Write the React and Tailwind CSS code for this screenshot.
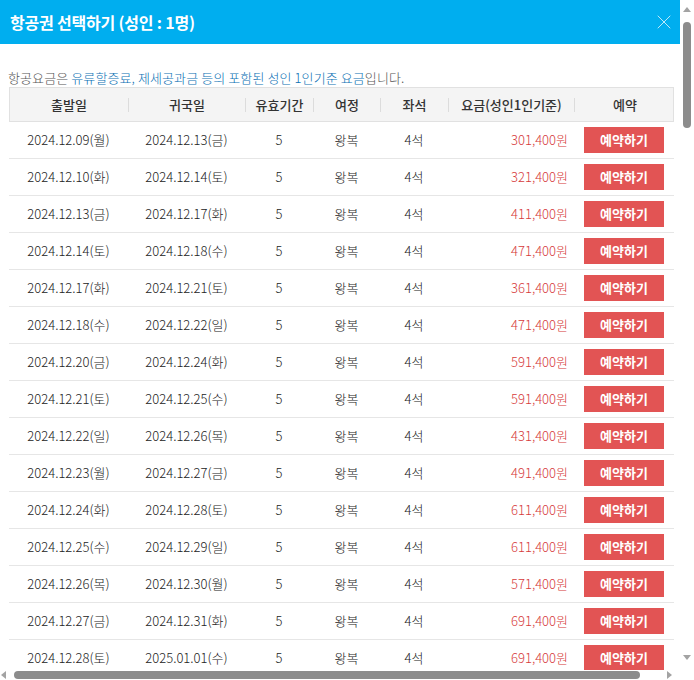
import { X } from "lucide-react";

const DAYS = ["일", "월", "화", "수", "목", "금", "토"];

const pad = n => String(n).padStart(2, "0");
const fmt = d => `${d.getFullYear()}.${pad(d.getMonth() + 1)}.${pad(d.getDate())}(${DAYS[d.getDay()]})`;

// 출발일 (12월), 요금
const visible = [
  [9, 301400], [10, 321400], [13, 411400], [14, 471400], [17, 361400],
  [18, 471400], [20, 591400], [21, 591400], [22, 431400], [23, 491400],
  [24, 611400], [25, 611400], [26, 571400], [27, 691400], [28, 691400],
];

const rows = visible.map(([day, price]) => {
  const dep = new Date(2024, 11, day);
  const ret = new Date(2024, 11, day + 4);
  return { dep: fmt(dep), ret: fmt(ret), price };
});

const cols = [
  { label: "출발일", w: "w-[119px]" },
  { label: "귀국일", w: "w-[117px]" },
  { label: "유효기간", w: "w-[68px]" },
  { label: "여정", w: "w-[67px]" },
  { label: "좌석", w: "w-[68px]" },
  { label: "요금(성인1인기준)", w: "w-[126px]" },
  { label: "예약", w: "w-[100px]" },
];

function Tri({ dir }) {
  const pts = {
    up: "0,5 4,0 8,5",
    down: "0,0 8,0 4,5",
    left: "5,0 5,8 0,4",
    right: "0,0 0,8 5,4",
  }[dir];
  const vertical = dir === "up" || dir === "down";
  return (
    <svg width={vertical ? 8 : 5} height={vertical ? 5 : 8} viewBox={vertical ? "0 0 8 5" : "0 0 5 8"}>
      <polygon points={pts} fill="#a3a3a3" />
    </svg>
  );
}

export default function App() {
  return (
    <div
      className="w-[694px] h-[680px] flex flex-col overflow-hidden bg-white text-[#333]"
      style={{ fontFamily: '"Noto Sans CJK KR", "Noto Sans", sans-serif' }}
    >
      <div className="flex flex-1 min-h-0">
        <div className="w-[680px] overflow-hidden">
          <div className="h-[44px] bg-[#00aeef] flex items-center justify-between pl-[10px] pr-[4px]">
            <h1 className="text-white text-[16px] font-bold tracking-[-0.2px]">항공권 선택하기 (성인 : 1명)</h1>
            <X className="w-[24px] h-[24px] text-[#bfeaf9]" strokeWidth={1} />
          </div>

          <p className="mt-[25px] ml-[8px] text-[13px] leading-[18px] text-[#555] font-light tracking-[0.1px]">
            항공요금은 <span className="text-[#0a70b4]">유류할증료, 제세공과금 등의 포함된 성인 1인기준 요금</span>입니다.
          </p>

          <div className="ml-[9px] w-[665px]">
            <div className="flex h-[35px] bg-[#f4f4f4] border border-[#e1e1e1] text-[13px] text-[#333] font-medium">
              {cols.map((c, i) => (
                <div key={c.label} className={`${c.w} shrink-0 flex items-center relative`}>
                  <span className="flex-1 text-center">{c.label}</span>
                  {i < cols.length - 1 && <span className="w-px h-[14px] bg-[#dcdcdc]" />}
                </div>
              ))}
            </div>

            {rows.map(r => (
              <div key={r.dep} className="flex h-[37px] items-center border-b border-[#e6e6e6] text-[13px] text-[#222] font-light">
                <div className="w-[119px] shrink-0 text-center">{r.dep}</div>
                <div className="w-[117px] shrink-0 text-center">{r.ret}</div>
                <div className="w-[68px] shrink-0 text-center">5</div>
                <div className="w-[67px] shrink-0 text-center">왕복</div>
                <div className="w-[68px] shrink-0 text-center">4석</div>
                <div className="w-[126px] shrink-0 text-right pr-[6px] text-[#d63a3a]">
                  {r.price.toLocaleString("en-US")}원
                </div>
                <div className="w-[100px] shrink-0 flex justify-center">
                  <button className="w-[80px] h-[26px] bg-[#e25454] text-white text-[13px] font-bold">예약하기</button>
                </div>
              </div>
            ))}
          </div>
        </div>

        {/* 세로 스크롤바 */}
        <div className="w-[14px] flex flex-col items-center pt-[7px] pb-[10px]">
          <Tri dir="up" />
          <div className="mt-[10px] w-[8px] h-[106px] rounded-full bg-[#8c8c8c]" />
          <div className="flex-1" />
          <Tri dir="down" />
        </div>
      </div>

      {/* 가로 스크롤바 */}
      <div className="h-[10px] flex items-center">
        <div className="w-[680px] flex items-center pl-[1px] pr-[8px]">
          <Tri dir="left" />
          <div className="ml-[8px] w-[626px] h-[8px] rounded-full bg-[#8c8c8c]" />
          <div className="flex-1" />
          <Tri dir="right" />
        </div>
      </div>
    </div>
  );
}
